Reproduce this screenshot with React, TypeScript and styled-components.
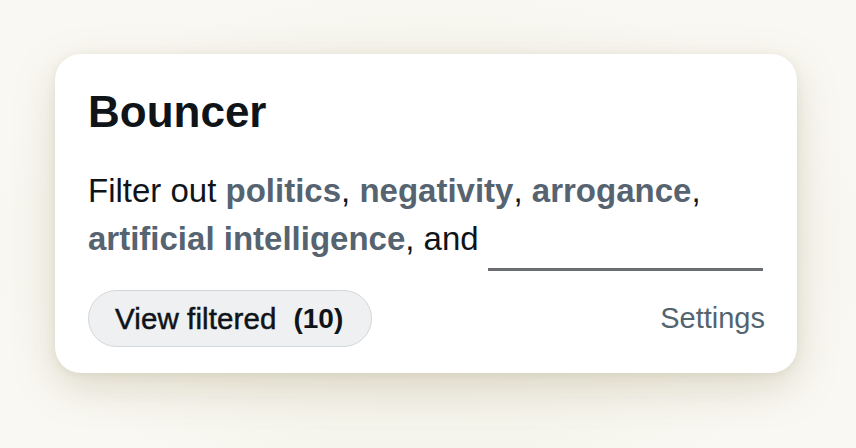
import styled, { createGlobalStyle } from "styled-components";

const GlobalStyle = createGlobalStyle`
	html, body {
		margin: 0;
		padding: 0;
		background: #f8f7f1;
	}
	body {
		font-family: "Liberation Sans", Arial, sans-serif;
		-webkit-font-smoothing: antialiased;
	}
`;

const Page = styled.div`
	width: 856px;
	height: 448px;
	box-sizing: border-box;
	padding: 54px 59px 0 55px;
	background: radial-gradient(ellipse at 50% 55%, #eeebe1 0%, #f4f3ea 45%, #f9f8f2 75%);
`;

const Card = styled.section`
	box-sizing: border-box;
	width: 742px;
	padding: 32px 32px 26px 33px;
	background: #fff;
	border-radius: 26px;
	box-shadow: 0 14px 40px rgba(150, 136, 96, 0.26), 0 2px 8px rgba(150, 136, 96, 0.12);
	display: flex;
	flex-direction: column;
`;

const Title = styled.h1`
	margin: 0;
	font-size: 44px;
	line-height: 52px;
	font-weight: 700;
	color: #0f1419;
`;

const Sentence = styled.p`
	margin: 29px 0 0;
	font-size: 33px;
	line-height: 48px;
	color: #0f1419;
`;

const Topic = styled.b`
	font-weight: 700;
	color: #566370;
`;

const Blank = styled.span`
	display: inline-block;
	width: 275px;
	height: 0;
	border-bottom: 3px solid #6a6e73;
	vertical-align: -21px;
`;

const Footer = styled.div`
	margin-top: 19px;
	display: flex;
	align-items: center;
	justify-content: space-between;
`;

const FilterButton = styled.button`
	box-sizing: border-box;
	height: 57px;
	padding: 0 28px 0 26px;
	border: 1.5px solid #d3d6d8;
	border-radius: 999px;
	background: #eff0f1;
	font-family: inherit;
	color: #0f1419;
	display: flex;
	align-items: center;
	cursor: pointer;
`;

const Label = styled.span`
	font-size: 29.5px;
	letter-spacing: 0.1px;
	-webkit-text-stroke: 0.5px #0f1419;
`;

const Count = styled.span`
	margin-left: 17px;
	font-size: 28px;
	font-weight: 700;
`;

const SettingsLink = styled.a`
	font-size: 29px;
	color: #536471;
	text-decoration: none;
`;

export default function App() {
	return (
		<>
			<GlobalStyle />
			<Page>
				<Card>
					<Title>Bouncer</Title>
					<Sentence>
						Filter out <Topic>politics</Topic>, <Topic>negativity</Topic>, <Topic>arrogance</Topic>,{" "}
						<Topic>artificial intelligence</Topic>, and <Blank />
					</Sentence>
					<Footer>
						<FilterButton type="button">
							<Label>View filtered</Label>
							<Count>(10)</Count>
						</FilterButton>
						<SettingsLink href="#">Settings</SettingsLink>
					</Footer>
				</Card>
			</Page>
		</>
	);
}
